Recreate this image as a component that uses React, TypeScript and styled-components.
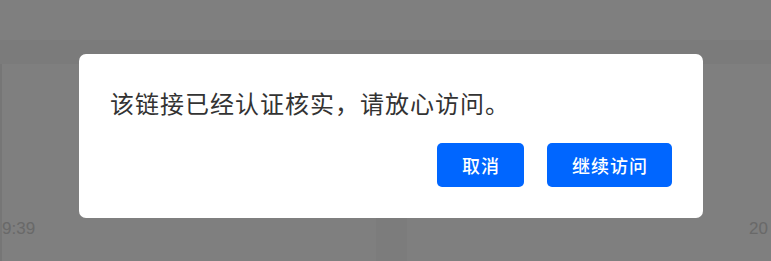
import React from 'react'
import styled, { createGlobalStyle } from 'styled-components'

const GlobalStyle = createGlobalStyle`
  html, body {
    margin: 0;
    padding: 0;
    background: #ffffff;
    font-family: "Microsoft YaHei", "Noto Sans CJK SC", "Noto Sans", sans-serif;
    overflow: hidden;
  }
`

const Page = styled.div`
  width: 100%;
  height: 261px;
  display: flex;
  flex-direction: column;
`

const Header = styled.div`
  height: 40px;
  background: #ffffff;
`

const SubBar = styled.div`
  height: 24px;
  background: #f6f6f6;
`

const Content = styled.div`
  flex: 1;
  display: flex;
`

const Card = styled.div<{ $wide?: boolean }>`
  width: ${p => (p.$wide ? 'auto' : '374px')};
  flex: ${p => (p.$wide ? 1 : 'none')};
  background: #fefefe;
  border-left: ${p => (p.$wide ? 'none' : '2px solid #ececec')};
  display: flex;
  flex-direction: column;
  justify-content: flex-end;
  align-items: flex-start;
  padding-left: ${p => (p.$wide ? '342px' : '0')};
  padding-bottom: 22px;
  overflow: hidden;
`

const Gap = styled.div`
  width: 31px;
  background: #f8f8f8;
`

const Stamp = styled.span`
  font-family: "Liberation Sans", Arial, sans-serif;
  font-size: 17px;
  color: #d2d2d2;
  white-space: nowrap;
`

const Overlay = styled.div`
  position: fixed;
  inset: 0;
  background: rgba(0, 0, 0, 0.5);
  display: flex;
  align-items: flex-start;
  justify-content: flex-start;
  padding: 54px 0 0 79px;
`

const Dialog = styled.div`
  width: 624px;
  box-sizing: border-box;
  background: #ffffff;
  border-radius: 7px;
  padding: 31px 31px 31px 31px;
  display: flex;
  flex-direction: column;
`

const Message = styled.div`
  font-size: 24px;
  letter-spacing: 1px;
  line-height: 36px;
  color: #333333;
  white-space: nowrap;
`

const Actions = styled.div`
  margin-top: 22px;
  display: flex;
  justify-content: flex-end;
  gap: 23px;
`

const ActionButton = styled.button`
  height: 44px;
  padding: 0 24px 0 25px;
  border: none;
  border-radius: 5px;
  background: #0066ff;
  color: #ffffff;
  font-family: inherit;
  font-size: 18px;
  font-weight: 500;
  letter-spacing: 1px;
  cursor: pointer;
`

export default function App() {
  return (
    <>
      <GlobalStyle />
      <Page>
        <Header />
        <SubBar />
        <Content>
          <Card>
            <Stamp>9:39</Stamp>
          </Card>
          <Gap />
          <Card $wide>
            <Stamp>20</Stamp>
          </Card>
        </Content>
      </Page>
      <Overlay>
        <Dialog>
          <Message>该链接已经认证核实，请放心访问。</Message>
          <Actions>
            <ActionButton>取消</ActionButton>
            <ActionButton>继续访问</ActionButton>
          </Actions>
        </Dialog>
      </Overlay>
    </>
  )
}
